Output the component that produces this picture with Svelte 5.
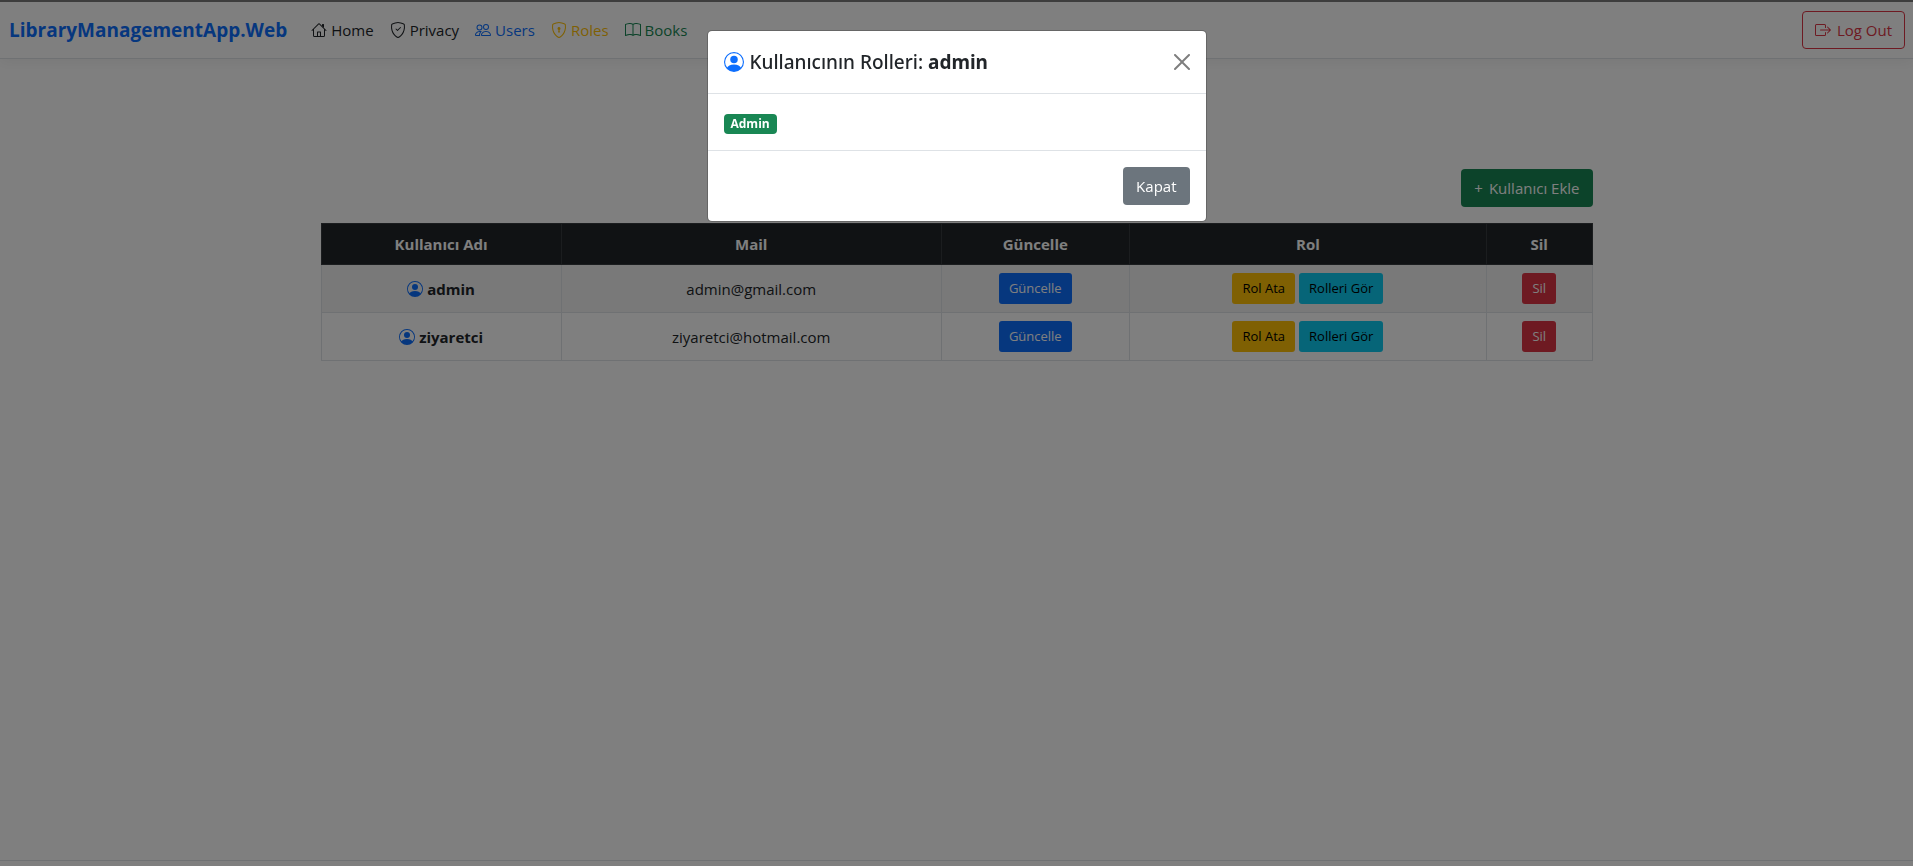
<script>
  const links = [
    { label: 'Home', icon: 'home', tone: 'dark' },
    { label: 'Privacy', icon: 'check', tone: 'dark' },
    { label: 'Users', icon: 'people', tone: 'primary' },
    { label: 'Roles', icon: 'lock', tone: 'warning' },
    { label: 'Books', icon: 'book', tone: 'success' }
  ];
  const users = [
    { name: 'admin', mail: 'admin@gmail.com', roles: ['Admin'] },
    { name: 'ziyaretci', mail: 'ziyaretci@hotmail.com', roles: [] }
  ];
  const shield =
    'M5.338 1.59a61.44 61.44 0 0 0-2.837.856.481.481 0 0 0-.328.39c-.554 4.157.726 7.19 2.253 9.188a10.725 10.725 0 0 0 2.287 2.233c.346.244.652.42.893.533.12.057.218.095.293.118a.55.55 0 0 0 .101.025.615.615 0 0 0 .1-.025c.076-.023.174-.061.294-.118.24-.113.547-.29.893-.533a10.726 10.726 0 0 0 2.287-2.233c1.527-1.997 2.807-5.031 2.253-9.188a.48.48 0 0 0-.328-.39c-.651-.213-1.75-.56-2.837-.855C9.552 1.29 8.531 1.067 8 1.067c-.53 0-1.552.223-2.662.524zM5.072.56C6.157.265 7.31 0 8 0s1.843.265 2.928.56c1.11.3 2.229.655 2.887.87a1.54 1.54 0 0 1 1.044 1.262c.596 4.477-.787 7.795-2.465 9.99a11.775 11.775 0 0 1-2.517 2.453 7.159 7.159 0 0 1-1.048.625c-.28.132-.581.24-.829.24s-.548-.108-.829-.24a7.158 7.158 0 0 1-1.048-.625 11.777 11.777 0 0 1-2.517-2.453C1.928 10.487.545 7.169 1.141 2.692A1.54 1.54 0 0 1 2.185 1.43 62.456 62.456 0 0 1 5.072.56z';
  const icons = {
    home: [
      'M2 13.5V7h1v6.5a.5.5 0 0 0 .5.5h9a.5.5 0 0 0 .5-.5V7h1v6.5a1.5 1.5 0 0 1-1.5 1.5h-9A1.5 1.5 0 0 1 2 13.5zm11-11V6l-2-2V2.5a.5.5 0 0 1 .5-.5h1a.5.5 0 0 1 .5.5z',
      'M7.293 1.5a1 1 0 0 1 1.414 0l6.647 6.646a.5.5 0 0 1-.708.708L8 2.207 1.354 8.854a.5.5 0 1 1-.708-.708L7.293 1.5z',
      'M6 14.5V10a.5.5 0 0 1 .5-.5h3a.5.5 0 0 1 .5.5v4.5H9v-4H7v4z'
    ],
    check: [
      shield,
      'M10.854 5.146a.5.5 0 0 1 0 .708l-3 3a.5.5 0 0 1-.708 0l-1.5-1.5a.5.5 0 1 1 .708-.708L7.5 7.793l2.646-2.647a.5.5 0 0 1 .708 0z'
    ],
    lock: [
      shield,
      'M9.5 6.5a1.5 1.5 0 0 1-1 1.415l.385 1.99a.5.5 0 0 1-.491.595h-.788a.5.5 0 0 1-.49-.595l.384-1.99a1.5 1.5 0 1 1 2-1.415z'
    ],
    people: [
      'M15 14s1 0 1-1-1-4-5-4-5 3-5 4 1 1 1 1h8zm-7.978-1A.261.261 0 0 1 7 12.996c.001-.264.167-1.03.76-1.72C8.312 10.629 9.282 10 11 10c1.717 0 2.687.63 3.24 1.276.593.69.758 1.457.76 1.72l-.008.002a.274.274 0 0 1-.014.002H7.022zM11 7a2 2 0 1 0 0-4 2 2 0 0 0 0 4zm3-2a3 3 0 1 1-6 0 3 3 0 0 1 6 0zM6.936 9.28a5.88 5.88 0 0 0-1.23-.247A7.35 7.35 0 0 0 5 9c-4 0-5 3-5 4 0 .667.333 1 1 1h4.216A2.238 2.238 0 0 1 5 13c0-1.01.377-2.042 1.09-2.904.243-.294.526-.569.846-.816zM4.92 10A5.493 5.493 0 0 0 4 13H1c0-.26.164-1.03.76-1.724.545-.636 1.492-1.256 3.16-1.275zM1.5 5.5a3 3 0 1 1 6 0 3 3 0 0 1-6 0zm3-2a2 2 0 1 0 0 4 2 2 0 0 0 0-4z'
    ],
    book: [
      'M1 2.828c.885-.37 2.154-.769 3.388-.893 1.33-.134 2.458.063 3.112.752v9.746c-.935-.53-2.12-.603-3.213-.493-1.18.12-2.37.461-3.287.811V2.828zm7.5-.141c.654-.689 1.782-.886 3.112-.752 1.234.124 2.503.523 3.388.893v9.923c-.918-.35-2.107-.692-3.287-.81-1.094-.111-2.278-.039-3.213.492V2.687zM8 1.783C7.015.936 5.587.81 4.287.94c-1.514.153-3.042.672-3.994 1.105A.5.5 0 0 0 0 2.5v11a.5.5 0 0 0 .707.455c.882-.4 2.303-.881 3.68-1.02 1.409-.142 2.59.087 3.223.877a.5.5 0 0 0 .78 0c.633-.79 1.814-1.019 3.222-.877 1.378.139 2.8.62 3.681 1.02A.5.5 0 0 0 16 13.5v-11a.5.5 0 0 0-.293-.455c-.952-.433-2.48-.952-3.994-1.105C10.413.809 8.985.936 8 1.783z'
    ],
    exit: [
      'M10 12.5a.5.5 0 0 1-.5.5h-8a.5.5 0 0 1-.5-.5v-9a.5.5 0 0 1 .5-.5h8a.5.5 0 0 1 .5.5v2a.5.5 0 0 0 1 0v-2A1.5 1.5 0 0 0 9.5 2h-8A1.5 1.5 0 0 0 0 3.5v9A1.5 1.5 0 0 0 1.5 14h8a1.5 1.5 0 0 0 1.5-1.5v-2a.5.5 0 0 0-1 0v2z',
      'M15.854 8.354a.5.5 0 0 0 0-.708l-3-3a.5.5 0 0 0-.708.708L14.293 7.5H5.5a.5.5 0 0 0 0 1h8.793l-2.147 2.146a.5.5 0 0 0 .708.708l3-3z'
    ],
    person: [
      'M11 6a3 3 0 1 1-6 0 3 3 0 0 1 6 0z',
      'M0 8a8 8 0 1 1 16 0A8 8 0 0 1 0 8zm8-7a7 7 0 0 0-5.468 11.37C3.242 11.226 4.805 10 8 10s4.757 1.225 5.468 2.37A7 7 0 0 0 8 1z'
    ],
    close: [
      'M.293.293a1 1 0 0 1 1.414 0L8 6.586 14.293.293a1 1 0 1 1 1.414 1.414L9.414 8l6.293 6.293a1 1 0 0 1-1.414 1.414L8 9.414l-6.293 6.293a1 1 0 0 1-1.414-1.414L6.586 8 .293 1.707a1 1 0 0 1 0-1.414z'
    ]
  };
  let selected = $state(users[0]);
</script>

{#snippet icon(name)}
  <svg class="icon" viewBox="0 0 16 16" fill="currentColor" aria-hidden="true">
    {#each icons[name] as d}<path {d} fill-rule="evenodd" />{/each}
  </svg>
{/snippet}

<div class="page">
  <header>
    <nav>
      <a class="brand" href="#home">LibraryManagementApp.Web</a>
      <ul>
        {#each links as link}
          <li><a class={link.tone} href="#{link.icon}">{@render icon(link.icon)}<span>{link.label}</span></a></li>
        {/each}
      </ul>
      <button class="btn outline">{@render icon('exit')}<span>Log Out</span></button>
    </nav>
  </header>

  <main>
    <div class="actions"><button class="btn green"><span>+</span><span>Kullanıcı Ekle</span></button></div>
    <table>
      <colgroup>
        <col class="c-name" /><col class="c-mail" /><col class="c-update" /><col class="c-role" /><col />
      </colgroup>
      <thead>
        <tr><th>Kullanıcı Adı</th><th>Mail</th><th>Güncelle</th><th>Rol</th><th>Sil</th></tr>
      </thead>
      <tbody>
        {#each users as user}
          <tr>
            <td><div class="cell name">{@render icon('person')}<strong>{user.name}</strong></div></td>
            <td>{user.mail}</td>
            <td><div class="cell"><button class="btn sm blue">Güncelle</button></div></td>
            <td>
              <div class="cell">
                <button class="btn sm yellow">Rol Ata</button>
                <button class="btn sm cyan" onclick={() => (selected = user)}>Rolleri Gör</button>
              </div>
            </td>
            <td><div class="cell"><button class="btn sm red">Sil</button></div></td>
          </tr>
        {/each}
      </tbody>
    </table>
  </main>

  <footer></footer>
</div>

{#if selected}
  <div class="backdrop">
    <div class="modal" role="dialog" aria-modal="true" aria-labelledby="modal-title">
      <div class="modal-header">
        <h5 id="modal-title">{@render icon('person')}<span>Kullanıcının Rolleri: <strong>{selected.name}</strong></span></h5>
        <button class="close" aria-label="Kapat" onclick={() => (selected = null)}>{@render icon('close')}</button>
      </div>
      <div class="modal-body">
        {#each selected.roles as role}<span class="badge">{role}</span>{/each}
      </div>
      <div class="modal-footer">
        <button class="btn gray" onclick={() => (selected = null)}>Kapat</button>
      </div>
    </div>
  </div>
{/if}

<style>
  :global(body) {
    margin: 0;
    background: #fff;
    color: #212529;
    font: 15px/24px 'Segoe UI', 'Open Sans', 'Noto Sans', sans-serif;
  }
  * { box-sizing: border-box; }
  .page {
    display: flex;
    flex-direction: column;
    min-height: 100vh;
    border-top: 2px solid #7c7c7c;
  }
  .icon { width: 16px; height: 16px; flex: none; }
  nav {
    display: flex;
    align-items: center;
    padding: 8px;
    border-bottom: 1px solid #dee2e6;
    box-shadow: 0 4px 12px rgba(0, 0, 0, 0.05);
  }
  a { text-decoration: none; }
  .brand { padding: 0 16px 0 1px; color: #0d6efd; font-size: 19px; font-weight: 700; line-height: 30px; }
  ul { display: flex; flex: 1; margin: 0; padding: 0; list-style: none; }
  li a { display: flex; align-items: center; gap: 4px; padding: 8px; }
  .dark { color: #212529; }
  .primary { color: #0d6efd; }
  .warning { color: #ffc107; }
  .success { color: #198754; }
  .btn {
    display: inline-flex;
    align-items: center;
    justify-content: center;
    gap: 6px;
    padding: 6px 12px;
    border: 1px solid transparent;
    border-radius: 4px;
    font: inherit;
    color: #fff;
    cursor: pointer;
  }
  .sm { padding: 4px 9px; border-radius: 3px; font-size: 13px; line-height: 21px; }
  .outline { background: transparent; border-color: #dc3545; color: #dc3545; }
  .green { background: #198754; }
  .blue { background: #0d6efd; }
  .yellow { background: #ffc107; color: #000; }
  .cyan { background: #0dcaf0; color: #000; }
  .red { background: #dc3545; }
  .gray { background: #6c757d; }

  main { flex: 1; width: 100%; max-width: 1320px; margin: 0 auto; padding: 110px 24px 16px; }
  .actions { display: flex; justify-content: flex-end; margin-bottom: 16px; }
  table { width: 100%; border-collapse: collapse; table-layout: fixed; text-align: center; }
  .c-name { width: 18.9%; }
  .c-mail { width: 29.9%; }
  .c-update { width: 14.8%; }
  .c-role { width: 28.1%; }
  th, td { padding: 8px; border: 1px solid #dee2e6; }
  th { background: #212529; border-color: #373b3e; color: #fff; font-weight: 700; }
  tbody tr:nth-child(odd) td { background: #f2f2f2; }
  .cell { display: flex; align-items: center; justify-content: center; gap: 4px; min-height: 31px; }
  .name .icon, h5 .icon { color: #0d6efd; }
  footer { height: 6px; border-top: 1px solid #dee2e6; }

  .backdrop { position: fixed; inset: 0; padding: 30px 8px; background: rgba(0, 0, 0, 0.5); }
  .modal {
    max-width: 500px;
    margin: 0 auto;
    background: #fff;
    background-clip: padding-box;
    border: 1px solid rgba(0, 0, 0, 0.2);
    border-radius: 5px;
  }
  .modal-header {
    display: flex;
    align-items: center;
    justify-content: space-between;
    padding: 16px;
    border-bottom: 1px solid #dee2e6;
  }
  h5 {
    display: flex;
    align-items: center;
    gap: 6px;
    margin: 0;
    font-family: 'Segoe UI', 'Noto Sans', sans-serif;
    font-size: 19px;
    font-weight: 500;
    line-height: 30px;
  }
  h5 .icon { width: 20px; height: 20px; }
  h5 strong { font-weight: 700; }
  .close { display: flex; padding: 0; border: 0; background: none; color: #000; opacity: 0.5; cursor: pointer; }
  .modal-body { min-height: 56px; padding: 16px; }
  .badge {
    display: inline-block;
    padding: 4px 7px;
    border-radius: 4px;
    background: #198754;
    color: #fff;
    font-size: 12px;
    font-weight: 700;
    line-height: 12px;
  }
  .modal-footer { display: flex; justify-content: flex-end; padding: 16px; border-top: 1px solid #dee2e6; }
</style>
